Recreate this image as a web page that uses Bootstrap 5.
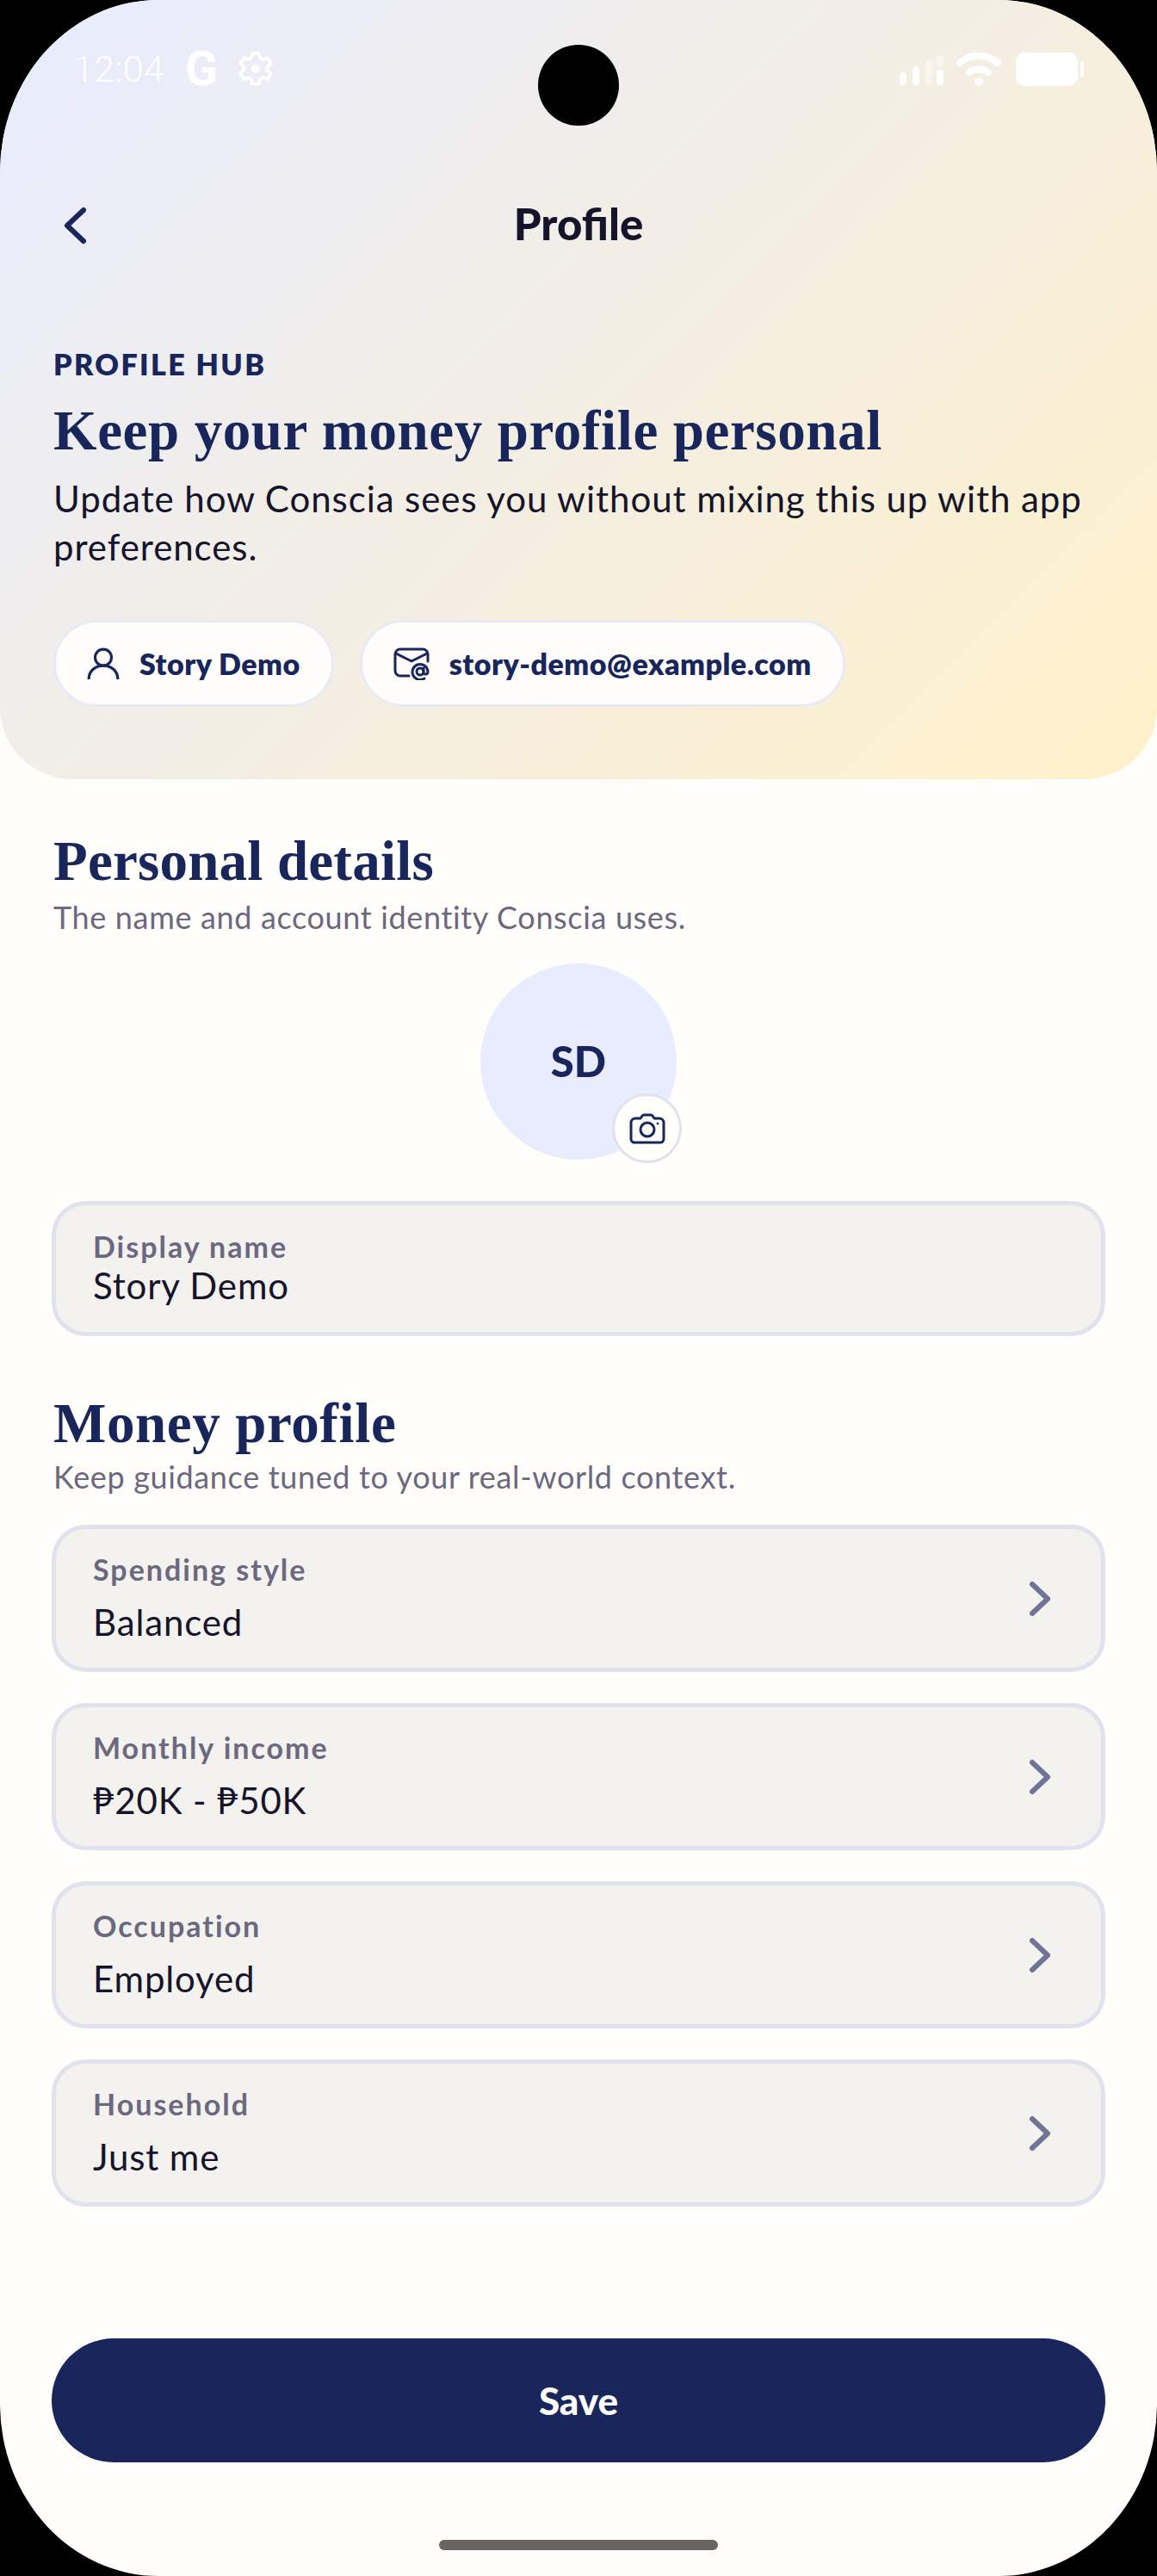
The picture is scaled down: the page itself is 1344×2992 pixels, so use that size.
<!DOCTYPE html>
<html lang="en">
<head>
<meta charset="utf-8">
<title>Profile</title>
<link href="https://cdn.jsdelivr.net/npm/bootstrap@5.3.0/dist/css/bootstrap.min.css" rel="stylesheet">
<style>
html,body{background:#000;margin:0;height:2992px;overflow:hidden}
body{font-family:"Lato","Noto Sans",sans-serif;color:#15142a}
.phone{width:1344px;height:2992px;background:#fffefa;border-radius:184px/200px;overflow:hidden;position:relative}
.hero{height:905px;background:linear-gradient(135deg,#e8ecff 0%,#fff1c9 100%);border-radius:0 0 84px 84px;padding:0 62px}
.hole{position:absolute;left:625px;top:52px;width:94px;height:94px;border-radius:50%;background:#000}
.statusrow{height:220px;padding-top:58px;margin:0 0 0 23px;align-items:flex-start;color:#fff}
.clock{font-family:"Roboto",sans-serif;font-weight:300;font-size:43px;line-height:44px;letter-spacing:.3px;opacity:.95}
.gee{font-family:"Roboto",sans-serif;font-weight:700;font-size:56px;line-height:44px;margin-left:24px}
.gear{margin-left:21px;margin-top:-1px}
.sysicons{margin-right:23px;margin-top:1px}
.navrow{height:80px}
.backbtn{position:absolute;left:72px;top:240px;width:32px;height:44px;padding:0;border:0;background:none;line-height:0}
.navtitle{font-family:"Lato",sans-serif;font-weight:900;font-size:51px;line-height:80px;color:#15142a;letter-spacing:0;margin:0}
.eyebrow{margin:101px 0 0;font-family:"Lato",sans-serif;font-weight:800;font-size:34px;line-height:44px;letter-spacing:2.4px;color:#18265c}
.serifhead{font-family:"Liberation Serif",serif;font-weight:700;font-size:65px;line-height:70px;color:#18265c;margin:0;letter-spacing:.6px}
.herotitle{margin-top:20px}
.herocopy{font-size:42px;line-height:56px;color:#15142a;margin:16px 0 0;letter-spacing:.93px}
.chiprow{margin-top:57px;gap:30px}
.chipitem{height:101px;border:3px solid #e8eaf6;background:#fefdfc;color:#18265c;font-weight:800;font-size:34px;padding:0 36px;gap:23px;letter-spacing:.5px}
.mainarea{padding:0 60px}
.sectionhead{margin:0 2px;padding-top:60px}
.personalhead{letter-spacing:.2px}
.sectionsub{margin:7px 2px 0;font-size:36px;line-height:46px;color:#6b6880;letter-spacing:.65px}
.avatarwrap{width:228px;height:228px;margin:31px auto 0;position:relative}
.avatarcircle{width:228px;height:228px;background:#e9ecff;color:#18265c;font-weight:900;font-size:49px}
.camerabtn{position:absolute;left:153px;top:151px;width:81px;height:81px;background:#fffefa;border:3px solid #e0e2ee;padding:0}
.fieldbox{background:#f3f2ef;border:5px solid #e0e2ee;border-radius:40px;padding:0 43px}
.fieldname{height:157px;margin-top:48px;padding-top:28px}
.fieldlabel{font-weight:700;font-size:34px;line-height:40px;color:#6b6880;letter-spacing:2px}
.fieldvalue{font-size:42px;line-height:50px;color:#15142a;letter-spacing:.85px}
.moneyhead{padding-top:66px}
.moneysub{margin-top:4px}
.rowsstack{margin-top:33px;gap:36px}
.fieldrow{height:171px;padding:0 57px 0 43px}
.fieldrow .fieldlabel{line-height:44px;margin-top:25px}
.fieldrow .fieldvalue{margin-top:14px}
.savebtn{position:absolute;left:60px;top:2716px;width:1224px;height:144px;background:#18265c;color:#fffefa;border:0;border-radius:72px;font-family:"Lato",sans-serif;font-weight:900;font-size:44px;letter-spacing:0}
.savebtn:hover{background:#18265c;color:#fffefa}
.homebar{position:absolute;left:510px;top:2950px;width:324px;height:12px;background:#666560;border-radius:6px}
</style>
</head>
<body>
<div class="phone">
  <header class="hero">
    <div class="statusrow d-flex">
      <span class="clock">12:04</span>
      <span class="gee">G</span>
      <svg class="gear" width="46" height="46" viewBox="0 0 24 24" fill="none" stroke="#fff" stroke-width="2" stroke-linejoin="round"><path d="M10 2.5h4l.6 2.8 1.9 1 2.7-.9 2 3.4-2.1 1.9v2.2l2.1 1.9-2 3.4-2.7-.9-1.9 1-.6 2.8h-4l-.6-2.8-1.9-1-2.7.9-2-3.4 2.1-1.9v-2.2L2.8 8.8l2-3.4 2.7.9 1.9-1z"/><circle cx="12" cy="12" r="2.6" fill="#fff" stroke="none"/></svg>
      <svg class="sysicons ms-auto" width="216" height="42" viewBox="0 0 216 42">
        <g fill="#fff"><rect x="2" y="25" width="8" height="15" rx="4"/><rect x="17" y="18" width="8" height="22" rx="4"/><rect x="32" y="11" width="8" height="29" rx="4" opacity=".45"/><rect x="45" y="5" width="8" height="13" rx="4" opacity=".45"/><rect x="45" y="22" width="8" height="18" rx="3"/></g>
        <g fill="none" stroke="#fff" stroke-width="8" stroke-linecap="round"><path d="M72 14c13-11 30-11 44 0"/><path d="M83 25c7-5 15-5 22 0"/></g>
        <circle cx="94" cy="36" r="5" fill="#fff"/>
        <rect x="137" y="2" width="72" height="39" rx="11" fill="#fff"/>
        <rect x="212" y="13" width="4" height="18" rx="2" fill="#fff" opacity=".9"/>
      </svg>
    </div>
    <div class="navrow text-center">
      <h1 class="navtitle">Profile</h1>
    </div>
    <p class="eyebrow">PROFILE HUB</p>
    <h2 class="serifhead herotitle">Keep your money profile personal</h2>
    <p class="herocopy">Update how Conscia sees you without mixing this up with app preferences.</p>
    <div class="chiprow d-flex">
      <div class="chipitem d-flex align-items-center rounded-pill">
        <svg width="38" height="38" viewBox="0 0 36 36" fill="none" stroke="#18265c" stroke-width="3"><circle cx="18" cy="11" r="9"/><path d="M2 35c0-9 7-15 16-15s16 6 16 15"/></svg>
        <span>Story Demo</span>
      </div>
      <div class="chipitem d-flex align-items-center rounded-pill" >
        <svg width="42" height="38" viewBox="0 0 42 38" fill="none" stroke="#18265c" stroke-width="3" stroke-linejoin="round" stroke-linecap="round"><path d="M18 33H8a6 6 0 0 1-6-6V8a6 6 0 0 1 6-6h26a6 6 0 0 1 6 6v8"/><path d="M3 7l18 9 18-9"/><circle cx="31" cy="28" r="4"/><path d="M35 24v5c0 3 5 3 5-1a9 9 0 1 0-4 8"/></svg>
        <span>story-demo@example.com</span>
      </div>
    </div>
  </header>
  <div class="hole"></div>
  <button class="backbtn btn" type="button" aria-label="Back">
    <svg width="32" height="44" viewBox="0 0 32 44" fill="none" stroke="#18265c" stroke-width="6" stroke-linecap="round" stroke-linejoin="round"><path d="M25 4L6 22l19 18"/></svg>
  </button>

  <main class="mainarea">
    <h2 class="serifhead sectionhead personalhead">Personal details</h2>
    <p class="sectionsub">The name and account identity Conscia uses.</p>
    <div class="avatarwrap">
      <div class="avatarcircle rounded-circle d-flex align-items-center justify-content-center">SD</div>
      <button class="camerabtn btn rounded-circle d-flex align-items-center justify-content-center" type="button" aria-label="Change photo">
        <svg width="42" height="36" viewBox="0 0 42 36" fill="none" stroke="#18265c" stroke-width="3" stroke-linejoin="round"><path d="M13 6l2-3a3 3 0 0 1 2-1h8a3 3 0 0 1 2 1l2 3h6a5 5 0 0 1 5 5v19a4 4 0 0 1-4 4H6a4 4 0 0 1-4-4V11a5 5 0 0 1 5-5z"/><circle cx="21" cy="19" r="8"/><circle cx="33" cy="12" r="1" fill="#18265c" stroke-width="1"/></svg>
      </button>
    </div>
    <div class="fieldbox fieldname">
      <div class="fieldlabel">Display name</div>
      <div class="fieldvalue">Story Demo</div>
    </div>

    <h2 class="serifhead sectionhead moneyhead">Money profile</h2>
    <p class="sectionsub moneysub">Keep guidance tuned to your real-world context.</p>
    <div class="rowsstack d-flex flex-column">
      <div class="fieldbox fieldrow d-flex justify-content-between">
        <div><div class="fieldlabel">Spending style</div><div class="fieldvalue">Balanced</div></div>
        <svg class="align-self-center" width="28" height="44" viewBox="0 0 28 44" fill="none" stroke="#6f7596" stroke-width="6" stroke-linecap="round" stroke-linejoin="round"><path d="M5 5l18 17L5 39"/></svg>
      </div>
      <div class="fieldbox fieldrow d-flex justify-content-between">
        <div><div class="fieldlabel">Monthly income</div><div class="fieldvalue">₱20K - ₱50K</div></div>
        <svg class="align-self-center" width="28" height="44" viewBox="0 0 28 44" fill="none" stroke="#6f7596" stroke-width="6" stroke-linecap="round" stroke-linejoin="round"><path d="M5 5l18 17L5 39"/></svg>
      </div>
      <div class="fieldbox fieldrow d-flex justify-content-between">
        <div><div class="fieldlabel">Occupation</div><div class="fieldvalue">Employed</div></div>
        <svg class="align-self-center" width="28" height="44" viewBox="0 0 28 44" fill="none" stroke="#6f7596" stroke-width="6" stroke-linecap="round" stroke-linejoin="round"><path d="M5 5l18 17L5 39"/></svg>
      </div>
      <div class="fieldbox fieldrow d-flex justify-content-between">
        <div><div class="fieldlabel">Household</div><div class="fieldvalue">Just me</div></div>
        <svg class="align-self-center" width="28" height="44" viewBox="0 0 28 44" fill="none" stroke="#6f7596" stroke-width="6" stroke-linecap="round" stroke-linejoin="round"><path d="M5 5l18 17L5 39"/></svg>
      </div>
    </div>
  </main>
  <button class="savebtn btn" type="button">Save</button>
  <div class="homebar"></div>
</div>
<script src="https://cdn.jsdelivr.net/npm/bootstrap@5.3.0/dist/js/bootstrap.bundle.min.js"></script>
</body>
</html>
